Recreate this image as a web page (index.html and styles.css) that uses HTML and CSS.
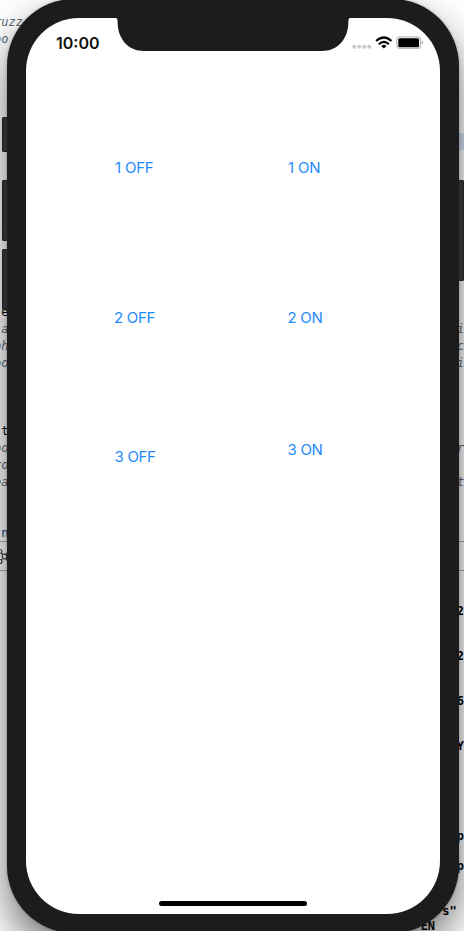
FILE: index.html
```html
<!DOCTYPE html>
<html lang="en">
<head>
<meta charset="utf-8">
<title>Simulator</title>
<link rel="stylesheet" href="styles.css">
</head>
<body>
<main class="desktop">
<div class="editor">
<pre class="code code-left"><i>ruzz</i>
<i>oo</i>





<span class="purple"> C</span>




<span class="brown"> p</span>




 e
 <i>a</i>
<i>ph</i>
<i>oo</i>



 t
<i>oo</i>
<i>ro</i>
<i>ea</i>


 <span class="navy">n</span></pre>
<pre class="code code-right">












:





<i>i</i>
<i>c</i>
<i>i</i>




<i>r</i>

<i>t</i></pre>
</div>
<div class="toolbar"><svg class="nodes" width="8" height="18" viewBox="0 0 8 18"><g fill="none" stroke="#444" stroke-width="1.2"><circle cx="4.500" cy="9.500" r="2.300"/><circle cx="0" cy="4.500" r="2"/><circle cx="0" cy="14.500" r="2"/><path d="M1.300 6L3 7.700M1.300 13L3 11.300M5.800 7.500L8 5M5.800 11.500L8 14"/></g></svg></div>
<pre class="console">


2


2


6


Y





p

p


s" 
EN    </pre>
<i class="key key-mute"></i><i class="key key-up"></i><i class="key key-down"></i><i class="key key-power"></i>
<section class="phone">
<div class="screen">
<svg class="notch" width="234" height="34" viewBox="0 0 234 34"><path fill="#1c1c1c" d="M0 0H234V0C232.500 .3 232.300 2 232.300 6C231.500 22 221 33 206 33H28C13 33 2.500 22 1.700 6C1.700 2 1.500 .3 0 0Z"/></svg>
<header class="status">
<span class="time">10:00</span>
<div class="indicators">
<svg width="20" height="13" viewBox="0 0 20 13" fill="#c8c8c8"><circle cx="2.200" cy="10.700" r="2"/><circle cx="7.200" cy="10.700" r="2"/><circle cx="12.200" cy="10.700" r="2"/><circle cx="17.200" cy="10.700" r="2"/></svg>
<svg class="wifi" width="18" height="13" viewBox="0 0 18 13"><g fill="none" stroke="#000" stroke-width="2.200"><path d="M1.100 5Q9 -2 16.500 5M3.800 8.200Q9 3.500 13.900 8.200"/></g><path d="M6.200 10Q9 7.700 11.500 10L8.900 12.500Z"/></svg>
<svg class="battery" width="28" height="13" viewBox="0 0 28 13"><rect x=".9" y=".9" width="23.500" height="11.600" rx="3" fill="#fff" stroke="#bdbdbd" stroke-width="1.300"/><rect x="2.300" y="2.300" width="20.700" height="8.900" rx="1.500"/><path d="M25.700 4.700Q27.200 5.400 27.200 6.600T25.700 8.500Z" fill="#aaa"/></svg>
</div>
</header>
<div class="controls">
<div class="col off"><button>1 OFF</button><button>2 OFF</button><button>3 OFF</button></div>
<div class="col on"><button>1 ON</button><button>2 ON</button><button>3 ON</button></div>
</div>
<div class="home"></div>
</div>
</section>
</main>
</body>
</html>
```
FILE: styles.css
```css
body {
  margin: 0;
  background: #fff;
}
.desktop {
  position: relative;
  width: 464px;
  height: 931px;
  overflow: hidden;
}
.editor {
  display: flex;
  justify-content: space-between;
  height: 541px;
  padding-top: 14px;
  box-sizing: border-box;
  background: linear-gradient(#d5e3f5, #d5e3f5) right 133px / 8px 17px no-repeat;
}
.code {
  margin: 0;
  font: 12px/17.05px "DejaVu Sans Mono", monospace;
  color: #000;
}
.code i {
  color: #5d6c79;
}
.code-left {
  width: 30px;
  margin-left: -6px;
}
.code-right {
  width: 7px;
  overflow: hidden;
}
.purple { color: #5b2a7a; }
.brown { color: #8a5a20; }
.navy { color: #0b3f80; }
.toolbar {
  height: 28px;
  border-top: 1px solid #aaa;
  border-bottom: 1px solid #aaa;
}
.nodes {
  display: block;
  margin: 5px 0 0;
}
.console {
  margin: 3px 0 0;
  text-align: right;
  font: bold 12px/15px "DejaVu Sans Mono", monospace;
}
.key {
  position: absolute;
  left: 2px;
  width: 6px;
  border-radius: 2px 0 0 2px;
  background: #2d2d2d;
  box-shadow: inset 0 0 0 1px #202020;
  z-index: 1;
}
.key-mute { top: 117px; height: 35px; }
.key-up { top: 180px; height: 61px; }
.key-down { top: 249px; height: 61px; }
.key-power { top: 180px; left: 458px; height: 101px; border-radius: 0 2px 2px 0; }
.phone {
  position: absolute;
  z-index: 0;
  left: 7px;
  top: -1px;
  width: 452px;
  height: 934px;
  box-sizing: border-box;
  padding: 19px;
  border-radius: 67px;
  background: #1c1c1c;
  box-shadow: 0 0 3px rgba(0, 0, 0, .25), 0 20px 40px rgba(0, 0, 0, .55);
}
.screen {
  position: relative;
  display: flex;
  flex-direction: column;
  width: 414px;
  height: 896px;
  border-radius: 53px;
  background: #fff;
  font-family: Inter, sans-serif;
}
.notch {
  position: absolute;
  top: 0;
  left: 90px;
}
.status {
  display: flex;
  justify-content: space-between;
  height: 44px;
  padding: 0 16px 0 30px;
}
.time {
  margin-top: 15px;
  font-size: 16px;
  line-height: 20px;
  font-weight: 600;
  color: #111;
}
.indicators {
  display: flex;
  margin-top: 18px;
}
.wifi { margin-left: 3px; }
.battery { margin-left: 3px; }
.controls {
  display: flex;
  flex: 1;
  padding: 96px 0 0 88px;
}
.col {
  display: flex;
  flex-direction: column;
  align-items: flex-start;
  flex: 0 0 173px;
}
.on { flex: 1; }
.col button {
  height: 20px;
  margin: 0 0 130px;
  padding: 0;
  border: 0;
  background: none;
  color: #1f8afc;
  font: 15px/20px Inter, sans-serif;
  letter-spacing: -.3px;
}
.col button:first-child { padding-left: 1px; letter-spacing: -.2px; }
.off button:nth-child(2) { margin-bottom: 119px; }
.on button:nth-child(2) { margin-bottom: 112px; }
.off button:nth-child(3) { padding-left: .5px; }
.on button { padding-left: .5px; }
.home {
  width: 148px;
  height: 5px;
  margin: 0 auto 8px;
  border-radius: 3px;
  background: #000;
}
```
